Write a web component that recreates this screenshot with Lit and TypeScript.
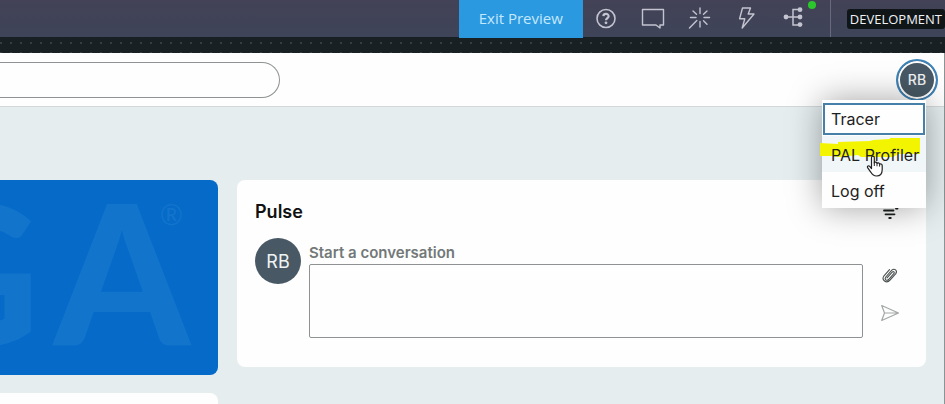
import { LitElement, html, css, svg } from "lit";
import { customElement, property } from "lit/decorators.js";

const helpIcon = svg`<svg viewBox="0 0 24 24" width="24" height="24" aria-hidden="true">
  <circle cx="12" cy="11.500" r="9" fill="none" stroke="currentColor" stroke-width="1.600"/>
  <path d="M9.400 9.100C9.500 6.100 14.700 6.200 14.600 9.200C14.500 11.100 12.100 11.100 12 13.200" fill="none" stroke="currentColor" stroke-width="2.200"/>
  <circle cx="12" cy="15.800" r="1.400" fill="currentColor"/>
</svg>`;

const chatIcon = svg`<svg viewBox="0 0 24 24" width="24" height="24" aria-hidden="true">
  <path d="M1.500 2.500H22.500V18H19V21L15 18H1.500Z" fill="none" stroke="currentColor" stroke-width="1.400" stroke-linejoin="round"/>
</svg>`;

const wandIcon = svg`<svg viewBox="0 0 24 24" width="24" height="24" aria-hidden="true">
  <path d="M12 1V6.500M12 14.500V20M2.500 10.500H8M16 10.500H21.500M5 4L8.500 7.300M19 4L15.500 7.300M15.500 13.700L19 17.300M8.800 13.500L1.500 21" fill="none" stroke="currentColor" stroke-width="1.400" stroke-linecap="round"/>
</svg>`;

const boltIcon = svg`<svg viewBox="0 0 24 24" width="24" height="24" aria-hidden="true">
  <path d="M7.500 1H15.500L13.200 7H19L7.200 21L9.800 11.800H4.600Z" fill="none" stroke="currentColor" stroke-width="1.400" stroke-linejoin="round"/>
</svg>`;

const treeIcon = svg`<svg viewBox="0 0 24 24" width="24" height="24" aria-hidden="true">
  <path d="M4 10H18M18 2.500H11V18H18" fill="none" stroke="currentColor" stroke-width="1.500"/>
  <circle cx="4" cy="10" r="2.400" fill="currentColor"/>
  <circle cx="18" cy="2.700" r="2.400" fill="currentColor"/>
  <circle cx="18" cy="10" r="2.400" fill="currentColor"/>
  <circle cx="18" cy="17.600" r="2.400" fill="currentColor"/>
</svg>`;

const filterIcon = svg`<svg viewBox="0 0 20 20" width="20" height="20" aria-hidden="true">
  <path d="M4 8.500H13.500M5.500 12.300H14.500M9.200 16H10.800M16 6.500H17.500" fill="none" stroke="#1c2020" stroke-width="1.800" stroke-linecap="round"/>
</svg>`;

const clipIcon = svg`<svg viewBox="0 0 20 20" width="20" height="20" aria-hidden="true">
  <path d="M7 12.800L12.200 7.200C13.500 5.900 15 7.300 13.800 8.600L8.600 14.500C6.500 16.400 4 14.200 5.800 12L11.800 5.200C14.500 2.800 17.800 5.600 15.800 8.600L10 15.200C6.500 19 1 15 4 10.800L9.500 4.600" fill="none" stroke="#4b5050" stroke-width="1.100" stroke-linecap="round"/>
</svg>`;

const sendIcon = svg`<svg viewBox="0 0 20 20" width="20" height="20" aria-hidden="true">
  <path d="M1.700 2.500L18.500 10L1.700 17.500L4.500 10Z M4.500 10H18" fill="none" stroke="#a4a8a8" stroke-width="1.200" stroke-linejoin="round"/>
</svg>`;

const handIcon = svg`<svg viewBox="0 0 18 22" width="18" height="22" aria-hidden="true">
  <path d="M5.500 13.500V2.600C5.500 .6 8.300 .6 8.300 2.600V8C8.500 6.600 11 6.800 11 8.500C11.400 7.400 13.600 7.700 13.600 9.300C14.200 8.400 16.200 8.900 16.200 10.600V14.500C16.200 18.500 14 21 10.500 21C7.500 21 6.200 19.600 4.900 17.300L1.600 12.600C.8 11.200 2.600 10.200 3.700 11.400Z" fill="#fff" stroke="#222" stroke-width="1.200" stroke-linejoin="round"/>
  <path d="M8.300 7.500V11M11 8.500V11.300M13.600 9.300V11.600" fill="none" stroke="#222" stroke-width="1"/>
</svg>`;

@customElement("studio-bar")
export class StudioBar extends LitElement {
  static styles = css`
    :host { display: block; flex: none; font-family: "Open Sans", "Noto Sans", sans-serif; }
    .bar {
      display: flex;
      justify-content: flex-end;
      align-items: center;
      height: 37px;
      background: linear-gradient(#434256, #3e4459);
    }
    .exit {
      align-self: flex-start;
      width: 124px;
      height: 38px;
      padding: 0 0 2px;
      border: 0;
      background: #2b99df;
      color: #c4e8fc;
      font: 15px/20px "Open Sans", "Noto Sans", sans-serif;
    }
    .tool {
      position: relative;
      display: grid;
      place-items: center;
      width: 47px;
      height: 36px;
      padding: 0;
      border: 0;
      background: none;
      color: #c3c4cf;
    }
    .online {
      position: absolute;
      top: 0;
      right: 2px;
      width: 8px;
      height: 8px;
      border-radius: 50%;
      background: #2bc82b;
    }
    .rule {
      align-self: stretch;
      width: 1px;
      margin: 0 16px 0 12px;
      background: #666a7c;
    }
    .env {
      padding: 0 3px;
      border-radius: 3px;
      background: #101518;
      color: #f2f2f4;
      font-size: 13px;
      line-height: 20px;
    }
    .dots {
      height: 16px;
      background-color: #182023;
      background-image: radial-gradient(circle, #363e42 1px, transparent 1px);
      background-size: 10px 10px;
      background-position: 6px 1px;
    }
  `;

  render() {
    return html`
      <div class="bar">
        <button class="exit">Exit Preview</button>
        <button class="tool" aria-label="Help">${helpIcon}</button>
        <button class="tool" aria-label="Messages">${chatIcon}</button>
        <button class="tool" aria-label="Inspector">${wandIcon}</button>
        <button class="tool" aria-label="Performance">${boltIcon}</button>
        <button class="tool" aria-label="Clipboard">${treeIcon}<span class="online"></span></button>
        <span class="rule"></span>
        <span class="env">DEVELOPMENT</span>
      </div>
      <div class="dots"></div>
    `;
  }
}

@customElement("operator-menu")
export class OperatorMenu extends LitElement {
  @property() initials = "";

  static styles = css`
    :host { display: block; position: relative; }
    .avatar {
      display: block;
      width: 42px;
      height: 42px;
      padding: 0;
      border: 2px solid #3d83b8;
      border-radius: 50%;
      background: #485965;
      box-shadow: inset 0 0 0 2px #fff;
      color: #f0f3f4;
      font: 500 14px/20px Inter, sans-serif;
    }
    .menu {
      position: absolute;
      z-index: 1;
      top: 41px;
      right: 12px;
      width: 104px;
      box-sizing: border-box;
      margin: 0;
      padding: 2px 0 0;
      list-style: none;
      background: #fdfefd;
      box-shadow: 0 0 32px rgba(0, 0, 0, 0.36);
    }
    .item {
      display: block;
      position: relative;
      width: 100%;
      height: 36px;
      box-sizing: border-box;
      padding: 2px 0 0 9px;
      border: 0;
      background: none;
      color: #1d2122;
      font: 16px/20px Inter, sans-serif;
      text-align: left;
      white-space: nowrap;
    }
    .focused {
      height: 34px;
      padding: 0 0 0 8px;
      border: 1px solid #fdfefd;
      box-shadow: inset 0 0 0 2px #467fa8;
    }
    .hovered { background: #f1f6f8; }
    .item span { position: relative; }
    .marker { position: absolute; left: -2px; top: 2px; }
    .pointer { position: absolute; left: 44px; top: 19px; height: 22px; z-index: 1; }
    .marker svg, .pointer svg { display: block; }
  `;

  render() {
    return html`
      <button class="avatar" aria-haspopup="menu" aria-expanded="true">${this.initials}</button>
      <ul class="menu">
        <li><button class="item focused">Tracer</button></li>
        <li>
          <button class="item hovered">
            <i class="marker">
              <svg viewBox="0 0 101 21" width="101" height="21" aria-hidden="true">
                <path d="M0 5L18 6V4L50 3L53 2L70 1V0H100V16H78L73 19H41L38 17L20 19L12 18H0Z" fill="#f3f500"/>
              </svg>
            </i>
            <span>PAL Profiler</span>
            <i class="pointer">${handIcon}</i>
          </button>
        </li>
        <li><button class="item">Log off</button></li>
      </ul>
    `;
  }
}

@customElement("pulse-card")
export class PulseCard extends LitElement {
  static styles = css`
    :host {
      display: block;
      padding: 20px 18px 29px;
      border-radius: 8px;
      background: #fdfefd;
      font-family: Inter, sans-serif;
    }
    .head {
      display: flex;
      justify-content: space-between;
      align-items: center;
      padding-right: 8px;
    }
    h2 { margin: 0; color: #111; font-size: 18px; line-height: 24px; font-weight: 600; }
    .composer { display: flex; margin-top: 14px; }
    .avatar {
      display: grid;
      place-items: center;
      flex: none;
      width: 46px;
      height: 46px;
      margin-right: 8px;
      border-radius: 50%;
      background: #485965;
      color: #f0f3f4;
      font-size: 18px;
    }
    .field { flex: 1; min-width: 0; padding-top: 5px; }
    label { display: block; color: #737878; font-size: 15px; font-weight: 600; line-height: 20px; }
    textarea {
      display: block;
      box-sizing: border-box;
      width: 100%;
      height: 74px;
      margin-top: 1px;
      border: 1px solid #8f9292;
      border-radius: 2px;
      background: #fdfefd;
      resize: none;
      font: 15px/20px Inter, sans-serif;
    }
    .actions {
      display: flex;
      flex-direction: column;
      gap: 18px;
      padding: 27px 8px 0 17px;
    }
    .icon { display: block; width: 20px; height: 20px; padding: 0; border: 0; background: none; }
    .icon svg { display: block; }
  `;

  render() {
    return html`
      <div class="head">
        <h2>Pulse</h2>
        <button class="icon" aria-label="Filter">${filterIcon}</button>
      </div>
      <div class="composer">
        <span class="avatar">RB</span>
        <div class="field">
          <label for="message">Start a conversation</label>
          <textarea id="message"></textarea>
        </div>
        <div class="actions">
          <button class="icon" aria-label="Attach">${clipIcon}</button>
          <button class="icon" aria-label="Send">${sendIcon}</button>
        </div>
      </div>
    `;
  }
}

@customElement("app-root")
export class AppRoot extends LitElement {
  static styles = css`
    :host {
      display: flex;
      flex-direction: column;
      height: 100vh;
      overflow: hidden;
      background: #e5edef;
      font-family: Inter, sans-serif;
    }
    .portal {
      flex: 1;
      display: flex;
      flex-direction: column;
      min-height: 0;
      border-right: 1px solid #8b9494;
    }
    .header {
      display: flex;
      flex: none;
      justify-content: space-between;
      align-items: center;
      height: 53px;
      padding-right: 6px;
      border-bottom: 1px solid #d3d9da;
      background: #fdfefd;
    }
    .search {
      box-sizing: border-box;
      width: 280px;
      height: 36px;
      padding: 0 18px;
      border: 1px solid #8f9292;
      border-left: 0;
      border-radius: 0 18px 18px 0;
      background: #fdfefd;
      font: 15px/20px Inter, sans-serif;
    }
    .content {
      display: grid;
      grid-template-columns: 218px minmax(0, 1fr);
      align-items: start;
      gap: 18px 19px;
      padding: 73px 18px 0 0;
    }
    .banner {
      position: relative;
      display: flex;
      justify-content: flex-end;
      align-items: flex-start;
      height: 195px;
      padding-right: 28px;
      box-sizing: border-box;
      overflow: hidden;
      border-radius: 0 8px 8px 0;
      background: #056ac8;
      color: #1274cb;
      font-family: Lato, sans-serif;
    }
    .brand { display: flex; gap: 14px; font-size: 194px; line-height: 180px; font-weight: 900; }
    .reg { position: absolute; top: 20px; right: 35px; font: 28px/28px Lato, sans-serif; }
    .next { height: 80px; border-radius: 0 8px 0 0; background: #fdfefd; }
  `;

  render() {
    return html`
      <studio-bar></studio-bar>
      <div class="portal">
        <header class="header">
          <input class="search" type="search" aria-label="Search" />
          <operator-menu initials="RB"></operator-menu>
        </header>
        <main class="content">
          <section class="banner">
            <span class="brand"><span>G</span><span>A</span></span>
            <span class="reg">®</span>
          </section>
          <pulse-card></pulse-card>
          <section class="next"></section>
        </main>
      </div>
    `;
  }
}
